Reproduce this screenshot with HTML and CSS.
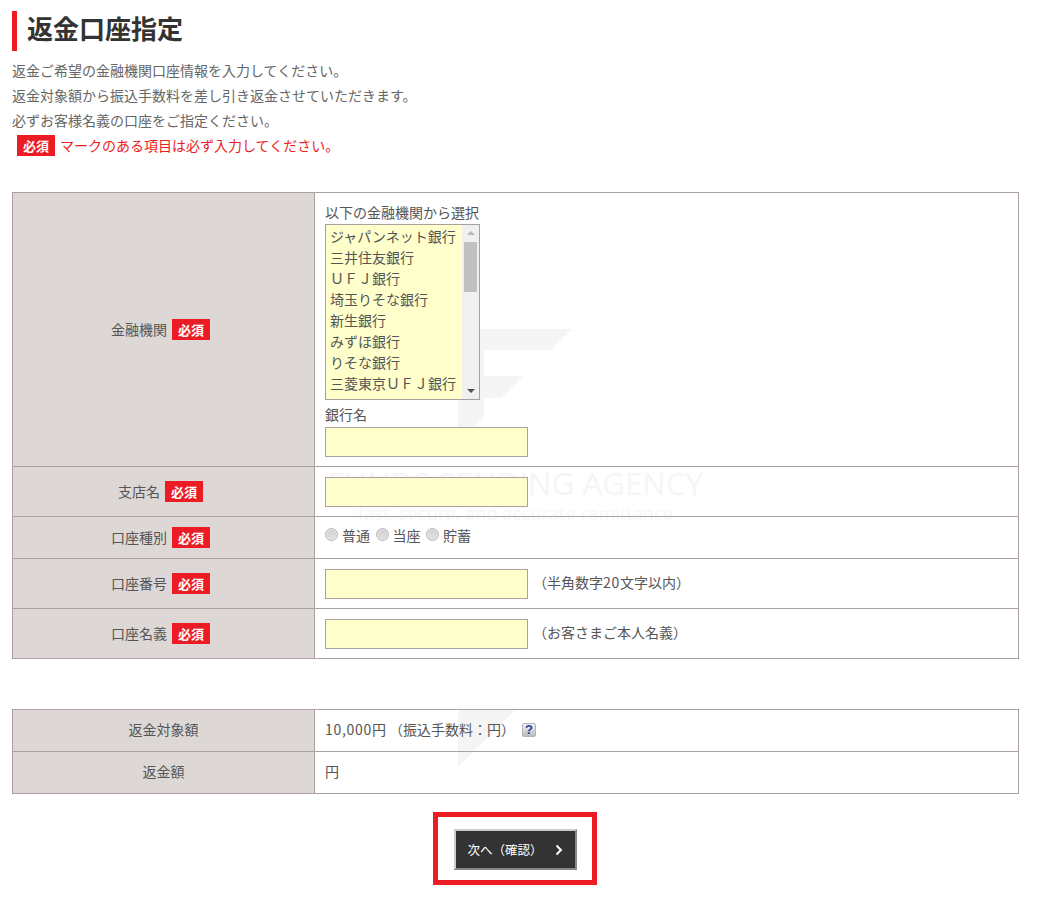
FILE: index.html
```html
<!DOCTYPE html>
<html lang="ja">
<head>
<meta charset="utf-8">
<title>返金口座指定</title>
<link rel="stylesheet" href="styles.css">
</head>
<body>
<main class="page">
  <h1 class="title">返金口座指定</h1>
  <div class="intro">
    <p>返金ご希望の金融機関口座情報を入力してください。</p>
    <p>返金対象額から振込手数料を差し引き返金させていただきます。</p>
    <p>必ずお客様名義の口座をご指定ください。</p>
    <p class="notice"><span class="badge">必須</span><span class="notice-text">マークのある項目は必ず入力してください。</span></p>
  </div>

  <div class="table-wrap first">
    <div class="watermark" aria-hidden="true">
      <svg class="wm-logo" width="114" height="114" viewBox="0 0 114 114"><path d="M0 0H114L93 21H26V47H65L43 69H26V88L0 114Z" fill="#f5f5f5"/></svg>
      <div class="wm-name">FUNDS SENDING AGENCY</div>
      <div class="wm-tag">fast, secure, and accurate remittance</div>
    </div>
    <table class="form-table">
      <tr class="r-bank">
        <th><span class="th-inner"><span class="th-label">金融機関</span><span class="badge">必須</span></span></th>
        <td>
          <div class="field-label first-label">以下の金融機関から選択</div>
          <div class="listbox" role="listbox">
            <div class="options">
              <div>ジャパンネット銀行</div>
              <div>三井住友銀行</div>
              <div>ＵＦＪ銀行</div>
              <div>埼玉りそな銀行</div>
              <div>新生銀行</div>
              <div>みずほ銀行</div>
              <div>りそな銀行</div>
              <div>三菱東京ＵＦＪ銀行</div>
            </div>
            <div class="scroll">
              <span class="arrow up"></span>
              <span class="thumb"></span>
              <span class="arrow down"></span>
            </div>
          </div>
          <div class="field-label">銀行名</div>
          <input class="text" type="text">
        </td>
      </tr>
      <tr class="r-input">
        <th><span class="th-inner"><span class="th-label">支店名</span><span class="badge">必須</span></span></th>
        <td><input class="text" type="text"></td>
      </tr>
      <tr class="r-radio">
        <th><span class="th-inner"><span class="th-label">口座種別</span><span class="badge">必須</span></span></th>
        <td>
          <div class="radios">
            <label><span class="radio"></span>普通</label>
            <label><span class="radio"></span>当座</label>
            <label><span class="radio"></span>貯蓄</label>
          </div>
        </td>
      </tr>
      <tr class="r-input">
        <th><span class="th-inner"><span class="th-label">口座番号</span><span class="badge">必須</span></span></th>
        <td><div class="with-note"><input class="text" type="text"><span class="note">（半角数字<span class="digits">20</span>文字以内）</span></div></td>
      </tr>
      <tr class="r-input">
        <th><span class="th-inner"><span class="th-label">口座名義</span><span class="badge">必須</span></span></th>
        <td><div class="with-note"><input class="text" type="text"><span class="note">（お客さまご本人名義）</span></div></td>
      </tr>
    </table>
  </div>

  <div class="table-wrap second">
    <svg class="wm-piece" width="58" height="58" viewBox="0 0 58 58" aria-hidden="true"><path d="M0 0H58L0 58Z" fill="#f5f5f5"/></svg>
    <table class="form-table">
      <tr class="r-plain">
        <th>返金対象額</th>
        <td><div class="amount"><span><span class="digits">10,000</span>円 （振込手数料：円）</span><span class="help">?</span></div></td>
      </tr>
      <tr class="r-plain">
        <th>返金額</th>
        <td>円</td>
      </tr>
    </table>
  </div>

  <div class="actions">
    <div class="highlight">
      <button class="next" type="button">
        <span>次へ（確認）</span>
        <svg width="8" height="12" viewBox="0 0 8 12" aria-hidden="true"><path d="M1.5 1.5L6 6L1.5 10.5" fill="none" stroke="#fff" stroke-width="2"/></svg>
      </button>
    </div>
  </div>
</main>
</body>
</html>
```

FILE: styles.css
```css
* { box-sizing: border-box; }
html, body { margin: 0; padding: 0; background: #fff; }
body {
  font-family: "Noto Sans CJK JP", "Noto Sans", sans-serif;
  font-size: 14px;
  color: #555;
}
.page { width: 1037px; height: 899px; padding: 11px 18px 0 12px; overflow: hidden; }
.title {
  margin: 0;
  height: 40px;
  border-left: 5px solid #ed1c24;
  padding-left: 10px;
  font-size: 26px;
  line-height: 33px;
  font-weight: 700;
  color: #333;
}
.intro { margin-top: 7px; }
.intro p { margin: 0; height: 25px; line-height: 25px; color: #666; }
.intro .notice { display: flex; align-items: center; padding-left: 5px; line-height: 25px; }
.notice-text { color: #ed1c24; margin-left: 5px; }
.badge {
  display: inline-block;
  width: 38px;
  height: 21px;
  line-height: 21px;
  background: #ed1c24;
  color: #fff;
  font-size: 13px;
  font-weight: 700;
  text-align: center;
  flex: none;
}
.table-wrap { position: relative; }
.table-wrap.first { margin-top: 34px; height: 467px; }
.table-wrap.second { margin-top: 50px; height: 85px; overflow: hidden; }
.form-table {
  position: relative;
  width: 1007px;
  border-collapse: collapse;
  table-layout: fixed;
  background: transparent;
}
.form-table th, .form-table td { border: 1px solid #aaa0a0; padding: 0; }
.form-table th {
  width: 302px;
  background: #ddd8d6;
  font-weight: 400;
  color: #555;
  text-align: center;
  vertical-align: middle;
}
.form-table td { padding-left: 10px; vertical-align: middle; }
.th-inner { display: inline-flex; align-items: center; gap: 5px; margin-right: 6px; }
.th-label { padding-bottom: 2px; }
.r-bank { height: 274px; }
.r-input { height: 50px; }
.r-radio { height: 42px; }
.r-plain { height: 42px; }
.form-table .r-plain th, .form-table .r-plain td { padding-bottom: 4px; }
.field-label { height: 20px; line-height: 14px; margin-top: 7px; }
.first-label { margin-top: 0; height: 21px; line-height: 19px; }
.listbox {
  display: flex;
  width: 155px;
  height: 176px;
  border: 1px solid #aaa0a0;
  background: #ffc;
}
.options { flex: 1; padding: 1px 0 0 4px; overflow: hidden; white-space: nowrap; color: #555; }
.options div { height: 21px; line-height: 21px; }
.scroll {
  position: relative;
  display: flex;
  flex-direction: column;
  align-items: center;
  width: 17px;
  background: #f0f0f0;
}
.thumb { width: 13px; height: 50px; background: #c0c0c0; margin-top: 0; }
.arrow { width: 0; height: 0; border-left: 4px solid transparent; border-right: 4px solid transparent; }
.arrow.up { border-bottom: 4px solid #b5b5b5; margin: 6px 0 7px; }
.arrow.down { border-top: 4px solid #505050; margin-top: auto; margin-bottom: 6px; }
.text {
  display: block;
  width: 203px;
  height: 30px;
  border: 1px solid #aaa0a0;
  background: #ffc;
  padding: 0 4px;
  border-radius: 0;
  outline: 0;
}
.with-note { display: flex; align-items: center; gap: 5px; }
.note { padding-bottom: 4px; }
.digits { letter-spacing: 0.7px; }
.radios { display: flex; gap: 5.5px; padding-bottom: 6px; }
.radios label { display: inline-flex; align-items: center; gap: 4px; }
.radio {
  width: 13px;
  height: 13px;
  margin-top: -1px;
  border-radius: 50%;
  border: 1px solid #b8b8b8;
  background: linear-gradient(#cfcfcf, #e2e2e2);
  box-shadow: inset 0 0 0 1px #e6e6e6;
}
.watermark {
  position: absolute;
  left: 0;
  top: 136px;
  width: 1007px;
  text-align: center;
}
.wm-logo { position: absolute; left: 446px; top: 1px; }
.wm-name {
  position: absolute;
  left: 0;
  right: 0;
  top: 138px;
  font-family: "Open Sans", sans-serif;
  font-size: 31.3px;
  line-height: 34px;
  color: #f5f5f5;
  white-space: nowrap;
}
.wm-tag {
  position: absolute;
  left: 0;
  right: 0;
  top: 173px;
  font-family: "Open Sans", sans-serif;
  font-size: 18.3px;
  line-height: 24px;
  color: #f7f7f7;
  white-space: nowrap;
}
.wm-piece { position: absolute; left: 446px; top: 0; }
.amount { display: flex; align-items: center; gap: 7px; }
.help {
  width: 14px;
  height: 14px;
  margin-top: 2px;
  border: 1px solid #b5b5b5;
  border-radius: 2px;
  background: linear-gradient(#f2f2f2, #b9bdc2);
  color: #17479a;
  font-family: "Liberation Sans", sans-serif;
  font-size: 13px;
  font-weight: 700;
  line-height: 12px;
  text-align: center;
}
.actions { display: flex; justify-content: center; margin-top: 18px; width: 1005px; }
.highlight { border: 5px solid #ed1c24; padding: 12px 16px 10px; width: 164px; height: 73px; }
.next {
  display: flex;
  align-items: center;
  justify-content: space-between;
  width: 123px;
  height: 41px;
  padding: 0 12px 0 12px;
  background: #333;
  border: 2px solid;
  border-color: #ccc #888 #888 #ccc;
  color: #fff;
  font-family: inherit;
  font-size: 12.5px;
}
```
